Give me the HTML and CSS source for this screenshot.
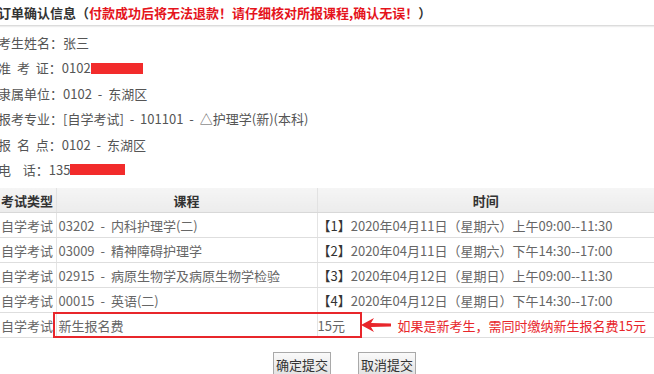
FILE: index.html
```html
<!DOCTYPE html>
<html lang="zh-CN">
<head>
<meta charset="utf-8">
<link rel="stylesheet" href="styles.css">
</head>
<body>
<div class="page">
  <div class="title"><span class="title-dark">订单确认信息（</span><span class="title-red">付款成功后将无法退款！请仔细核对所报课程,确认无误！</span><span class="title-dark">）</span></div>
  <div class="info">
    <div class="info-row">考生姓名：张三</div>
    <div class="info-row">准&nbsp;考&nbsp;证：0102<span class="redact redact-id"></span></div>
    <div class="info-row">隶属单位：0102 - 东湖区</div>
    <div class="info-row">报考专业：[自学考试] - 101101 - △护理学(新)(本科)</div>
    <div class="info-row">报&nbsp;名&nbsp;点：0102 - 东湖区</div>
    <div class="info-row">电&nbsp;&nbsp;话：135<span class="redact redact-tel"></span></div>
  </div>
  <div class="table-wrap">
    <table class="orders">
      <colgroup><col class="c1"><col class="c2"><col class="c3"></colgroup>
      <thead>
        <tr><th class="left">考试类型</th><th>课程</th><th>时间</th></tr>
      </thead>
      <tbody>
        <tr><td>自学考试</td><td>03202 - 内科护理学(二)</td><td><b class="br">【1】</b>2020年04月11日（星期六）上午09:00--11:30</td></tr>
        <tr><td>自学考试</td><td>03009 - 精神障碍护理学</td><td><b class="br">【2】</b>2020年04月11日（星期六）下午14:30--17:00</td></tr>
        <tr><td>自学考试</td><td>02915 - 病原生物学及病原生物学检验</td><td><b class="br">【3】</b>2020年04月12日（星期日）上午09:00--11:30</td></tr>
        <tr><td>自学考试</td><td>00015 - 英语(二)</td><td><b class="br">【4】</b>2020年04月12日（星期日）下午14:30--17:00</td></tr>
        <tr class="fee"><td>自学考试</td><td>新生报名费</td><td><div class="fee-cell"><span class="fee-amt">15元</span><svg class="arrow" width="30" height="14" viewBox="0 0 30 14"><polygon points="0,7 13,0 10,5 30,5.5 30,8.5 10,9 13,14" fill="#e8262b"/></svg><span class="note">如果是新考生，需同时缴纳新生报名费15元</span></div></td></tr>
      </tbody>
    </table>
    <div class="mark"></div>
  </div>
  <div class="buttons">
    <button class="btn">确定提交</button>
    <button class="btn">取消提交</button>
  </div>
</div>
</body>
</html>
```

FILE: styles.css
```css
html, body {
  margin: 0;
  padding: 0;
  background: #fff;
  overflow: hidden;
}
.page {
  width: 660px;
  margin-left: -2px;
  font-family: "Noto Sans CJK SC", "Microsoft YaHei", sans-serif;
  font-size: 13px;
  color: #555;
}
.title {
  height: 25px;
  line-height: 25px;
  font-size: 13px;
  font-weight: bold;
  border-bottom: 1px solid #dcdcdc;
  box-shadow: 0 1px 1px #eee;
  white-space: nowrap;
}
.title-dark { color: #333; }
.title-red { color: #e5141c; }
.info {
  padding-top: 4px;
  word-spacing: 3px;
}
.info-row {
  height: 25.4px;
  line-height: 25.4px;
  white-space: nowrap;
  display: flex;
  align-items: center;
}
.redact {
  display: inline-block;
  height: 11px;
  background: #f22b2b;
}
.redact-id { width: 52px; }
.redact-tel { width: 55px; }
.table-wrap {
  position: relative;
  margin-top: 6px;
  margin-left: 1px;
  width: 655px;
}
.orders {
  width: 655px;
  border-collapse: collapse;
  table-layout: fixed;
}
col.c1 { width: 57px; }
col.c2 { width: 261px; }
.orders th {
  height: 24px;
  padding: 0;
  background: linear-gradient(#f5f5f5, #ececec);
  color: #333;
  font-weight: bold;
  font-size: 13px;
  text-align: center;
  border-left: 1px solid #e2e2e2;
  border-bottom: 1px solid #d8d8d8;
}
.orders th.left { text-align: left; padding-left: 2px; border-left: none; }
.orders td {
  height: 24px;
  padding: 0 0 0 2px;
  border-bottom: 1px solid #dedede;
  border-left: 1px solid #e4e4e4;
  white-space: nowrap;
  overflow: visible;
  color: #666;
  word-spacing: 3px;
}
.orders td:first-child { border-left: none; color: #666; }
.orders td:nth-child(3) { padding-left: 0; }
.br { font-weight: normal; color: #333; }
.fee-cell {
  display: flex;
  align-items: center;
  word-spacing: 0;
}
.fee-amt { width: 43px; }
.arrow { margin-left: 0; }
.note {
  margin-left: 7px;
  color: #e8262b;
}
.mark {
  position: absolute;
  left: 54px;
  top: 124px;
  width: 305px;
  height: 22px;
  border: 2px solid #e8262b;
  pointer-events: none;
}
.buttons {
  display: flex;
  gap: 27px;
  padding-left: 275px;
  margin-top: 14px;
}
.btn {
  width: 58px;
  height: 24px;
  padding: 0;
  font-family: "Noto Sans CJK SC", sans-serif;
  font-size: 13px;
  color: #333;
  background: linear-gradient(#fafafa, #e2e2e2);
  border: 1px solid #a9a9a9;
  border-radius: 0;
}
```
